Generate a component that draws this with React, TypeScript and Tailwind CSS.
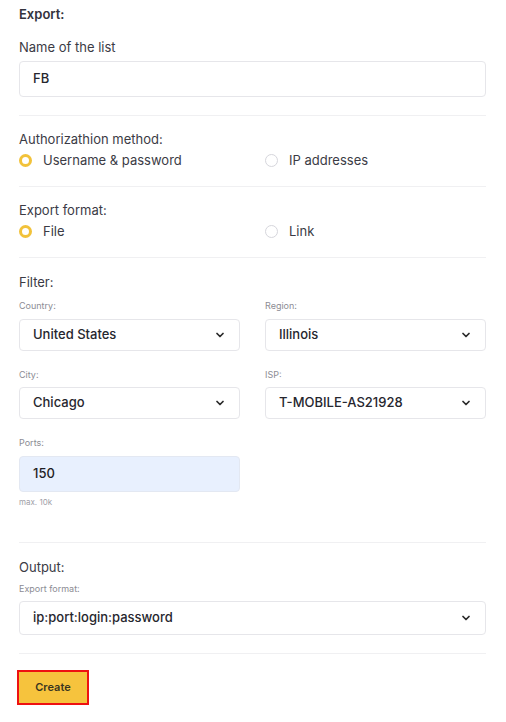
import { ChevronDown } from "lucide-react";

function Radio({ label, checked }: { label: string; checked?: boolean }) {
  return (
    <label className="flex items-center gap-[11px] text-[13px] text-[#3b3b45]">
      <span
        className={
          checked
            ? "w-[13px] h-[13px] rounded-full border-[3px] border-[#f2c23a] bg-white"
            : "w-[13px] h-[13px] rounded-full border border-[#d6d6dc] bg-white"
        }
      />
      {label}
    </label>
  );
}

function Select({ value, tall }: { value: string; tall?: boolean }) {
  return (
    <div
      className={
        (tall ? "h-[34px] " : "h-[32px] ") +
        "flex items-center justify-between px-[13px] border border-[#e6e6ea] rounded-[4px] bg-white text-[13px] font-medium text-[#26262e]"
      }
    >
      <span>{value}</span>
      <ChevronDown size={12} strokeWidth={3.5} className="text-[#2a2a2a]" />
    </div>
  );
}

function SmallLabel({ children }: { children: string }) {
  return <div className="text-[9px] text-[#8c8c94] mb-[6px]">{children}</div>;
}

export default function App() {
  return (
    <div
      className="w-[506px] min-h-[722px] bg-white px-[19px] pt-[4px]"
      style={{ fontFamily: "Inter, 'Noto Sans', sans-serif" }}
    >
      <div className="w-[467px]">
        <h2 className="text-[13px] font-semibold text-[#33333d] leading-[20px]">Export:</h2>

        <div className="mt-[14px] text-[13px] text-[#3b3b45] leading-[18px]">Name of the list</div>
        <div className="mt-[5px] h-[36px] flex items-center px-[13px] border border-[#e6e6ea] rounded-[4px] text-[13px] font-medium text-[#26262e]">
          FB
        </div>

        <div className="mt-[18px] border-t border-[#f0f0f2]" />

        <div className="pt-[14px] pb-[15px]">
          <div className="text-[13px] text-[#3b3b45] leading-[18px]">Authorizathion method:</div>
          <div className="mt-[3px] grid grid-cols-2 gap-[25px]">
            <Radio label="Username & password" checked />
            <Radio label="IP addresses" />
          </div>
        </div>

        <div className="border-t border-[#f0f0f2]" />

        <div className="pt-[14px] pb-[16px]">
          <div className="text-[13px] text-[#3b3b45] leading-[18px]">Export format:</div>
          <div className="mt-[3px] grid grid-cols-2 gap-[25px]">
            <Radio label="File" checked />
            <Radio label="Link" />
          </div>
        </div>

        <div className="border-t border-[#f0f0f2]" />

        <div className="pt-[15px]">
          <div className="text-[13px] text-[#3b3b45] leading-[18px]">Filter:</div>
          <div className="mt-[8px] grid grid-cols-2 gap-x-[25px] gap-y-[17px]">
            <div>
              <SmallLabel>Country:</SmallLabel>
              <Select value="United States" />
            </div>
            <div>
              <SmallLabel>Region:</SmallLabel>
              <Select value="Illinois" />
            </div>
            <div>
              <SmallLabel>City:</SmallLabel>
              <Select value="Chicago" />
            </div>
            <div>
              <SmallLabel>ISP:</SmallLabel>
              <Select value="T-MOBILE-AS21928" />
            </div>
            <div>
              <SmallLabel>Ports:</SmallLabel>
              <div className="h-[36px] flex items-center px-[13px] border border-[#e3e8f2] rounded-[4px] bg-[#e8f0fe] text-[13px] font-medium text-[#1e1e24]">
                150
              </div>
              <div className="mt-[4px] text-[8px] text-[#a0a0a8]">max. 10k</div>
            </div>
          </div>
        </div>

        <div className="mt-[34px] border-t border-[#f0f0f2]" />

        <div className="pt-[15px]">
          <div className="text-[13px] text-[#3b3b45] leading-[18px]">Output:</div>
          <div className="mt-[6px]">
            <SmallLabel>Export format:</SmallLabel>
            <Select value="ip:port:login:password" tall />
          </div>
        </div>

        <div className="mt-[18px] border-t border-[#f0f0f2]" />

        <button className="mt-[16px] -ml-[2px] w-[72px] h-[35px] border-2 border-[#ee1111] bg-[#f6c33d] text-[11px] font-semibold text-[#3a3520]">
          Create
        </button>
      </div>
    </div>
  );
}
